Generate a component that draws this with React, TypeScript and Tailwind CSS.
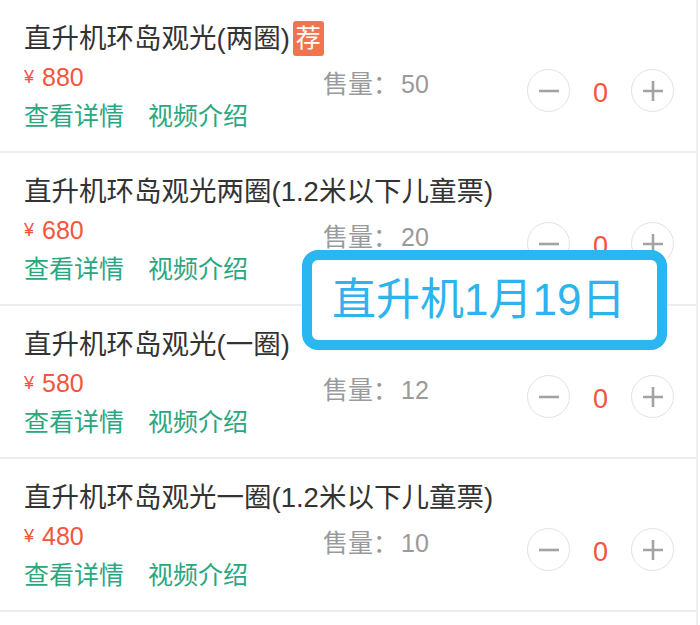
import { ReactNode } from "react";

type Ticket = {
	title: string;
	price: number;
	sold: number;
	hot?: boolean;
};

const tickets: Ticket[] = [
	{ title: "直升机环岛观光(两圈)", price: 880, sold: 50, hot: true },
	{ title: "直升机环岛观光两圈(1.2米以下儿童票)", price: 680, sold: 20 },
	{ title: "直升机环岛观光(一圈)", price: 580, sold: 12 },
	{ title: "直升机环岛观光一圈(1.2米以下儿童票)", price: 480, sold: 10 },
];

const RoundButton = ({ children }: { children: ReactNode }) => (
	<button className="w-[43px] h-[43px] rounded-full border border-[#e2e2e2] bg-white flex items-center justify-center shrink-0">
		{children}
	</button>
);

const Stepper = () => (
	<div className="flex items-center mt-[11px]">
		<RoundButton>
			<svg width="22" height="22" viewBox="0 0 22 22" fill="none">
				<path d="M1 11h20" stroke="#a3a3a3" strokeWidth="2.6" />
			</svg>
		</RoundButton>
		<span className="w-[61px] text-center text-[27px] leading-[30px] pt-[4px] text-[#f3553d]">0</span>
		<RoundButton>
			<svg width="22" height="22" viewBox="0 0 22 22" fill="none">
				<path d="M1 11h20M11 1v20" stroke="#a3a3a3" strokeWidth="2.6" />
			</svg>
		</RoundButton>
	</div>
);

const TicketRow = ({ title, price, sold, hot }: Ticket) => (
	<div className="pl-6 pr-[22px] pt-[19px] pb-[15px] border-b-2 border-[#ededed]">
		<div className="flex items-center h-[39px] text-[27.5px] text-[#333]">
			<span className="whitespace-nowrap">{title}</span>
			{hot && (
				<span className="ml-[3px] w-[31px] h-[35px] rounded-[3px] bg-[#f2744f] text-white text-[25px] leading-[35px] text-center">
					荐
				</span>
			)}
		</div>
		<div className="flex items-start">
			<div className="w-[299px] shrink-0">
				<p className="h-[39px] flex items-center text-[#f3553d]">
					<span className="text-[18px] mr-[8px]">¥</span>
					<span className="text-[25px]">{price}</span>
				</p>
				<div className="h-[39px] flex items-center gap-[24px] text-[25px] text-[#2ba77f]">
					<a>查看详情</a>
					<a>视频介绍</a>
				</div>
			</div>
			<p className="flex-1 mt-[11px] text-[25px] leading-[30px] text-[#9a9a9a]">
				售量：<span className="ml-[3px]">{sold}</span>
			</p>
			<Stepper />
		</div>
	</div>
);

const App = () => {
	return (
		<div className="relative w-[700px] h-[625px] bg-white overflow-hidden font-['Liberation_Sans','Noto_Sans_CJK_SC',sans-serif]">
			<div className="w-[698px] h-full border-r-2 border-[#efefef]">
				{tickets.map((t) => (
					<TicketRow key={t.title} {...t} />
				))}
			</div>
			{/* date tag laid over the list */}
			<div className="absolute left-[302px] top-[250px] w-[365px] h-[100px] rounded-[16px] border-[10px] border-[#2ab6ef] bg-white flex items-center pl-[20px]">
				<span className="text-[44px] leading-none text-[#2fb3ec] whitespace-nowrap">直升机1月19日</span>
			</div>
		</div>
	);
};

export default App;
